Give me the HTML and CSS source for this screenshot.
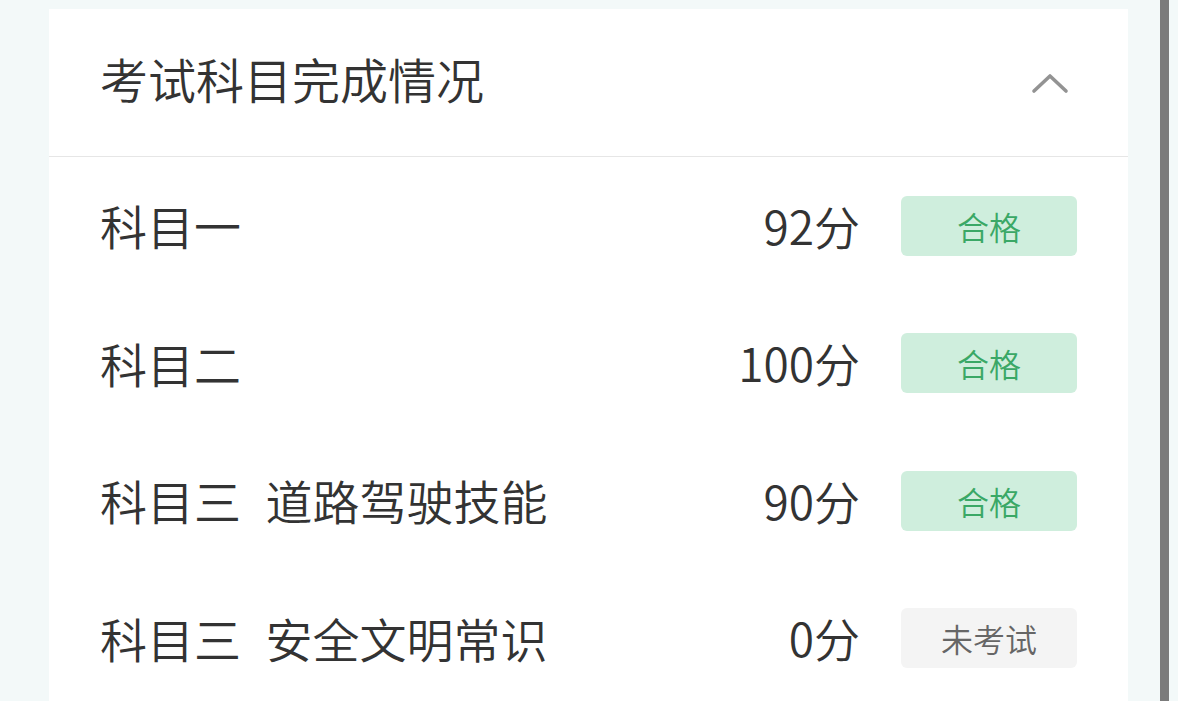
FILE: index.html
```html
<!DOCTYPE html>
<html lang="zh-CN">
<head>
<meta charset="utf-8">
<link rel="stylesheet" href="styles.css">
</head>
<body>
<div class="page">
  <div class="card">
    <div class="card-header">
      <div class="title">考试科目完成情况</div>
      <svg class="chevron" width="40" height="24" viewBox="0 0 40 24"><polyline points="3,20 19,5 35,20" fill="none" stroke="#939393" stroke-width="3.6" stroke-linecap="round" stroke-linejoin="round"/></svg>
    </div>
    <div class="row">
      <div class="name">科目一</div>
      <div class="score">92分</div>
      <div class="badge pass">合格</div>
    </div>
    <div class="row">
      <div class="name">科目二</div>
      <div class="score">100分</div>
      <div class="badge pass">合格</div>
    </div>
    <div class="row">
      <div class="name">科目三 道路驾驶技能</div>
      <div class="score">90分</div>
      <div class="badge pass">合格</div>
    </div>
    <div class="row">
      <div class="name">科目三 安全文明常识</div>
      <div class="score">0分</div>
      <div class="badge none">未考试</div>
    </div>
  </div>
  <div class="scrollbar"></div>
</div>
</body>
</html>
```
FILE: styles.css
```css
html, body {
  margin: 0;
  padding: 0;
  background: #f3f9f9;
  font-family: "Noto Sans CJK SC", "Noto Sans", sans-serif;
  color: #333;
  overflow: hidden;
}
.page {
  display: flex;
  height: 701px;
  padding-left: 49px;
  padding-top: 9px;
  box-sizing: border-box;
}
.card {
  width: 1079px;
  background: #fff;
  flex: none;
}
.card-header {
  height: 147px;
  border-bottom: 1px solid #e6e6e6;
  display: flex;
  align-items: center;
  justify-content: space-between;
  padding: 0 57px 0 51px;
}
.title {
  font-size: 48px;
  font-weight: 350;
  color: #333;
  line-height: 1;
  margin-top: -9px;
}
.chevron {
  display: block;
}
.row {
  height: 137.5px;
  display: flex;
  align-items: center;
  padding: 0 51px;
}
.name {
  flex: 1;
  font-size: 47px;
  font-weight: 350;
  line-height: 1;
  word-spacing: 14px;
  margin-top: -2px;
}
.score {
  font-size: 46px;
  font-weight: 350;
  line-height: 1;
  margin-right: 41px;
  margin-top: -2px;
}
.badge {
  width: 176px;
  height: 60px;
  border-radius: 6px;
  display: flex;
  align-items: center;
  justify-content: center;
  font-size: 32px;
  font-weight: 350;
}
.badge.pass {
  background: #cfeedd;
  color: #3aa866;
}
.badge.none {
  background: #f4f4f4;
  color: #666;
}
.scrollbar {
  width: 9px;
  margin-left: 32px;
  margin-top: -9px;
  background: #7b7b7b;
  flex: none;
}
```
